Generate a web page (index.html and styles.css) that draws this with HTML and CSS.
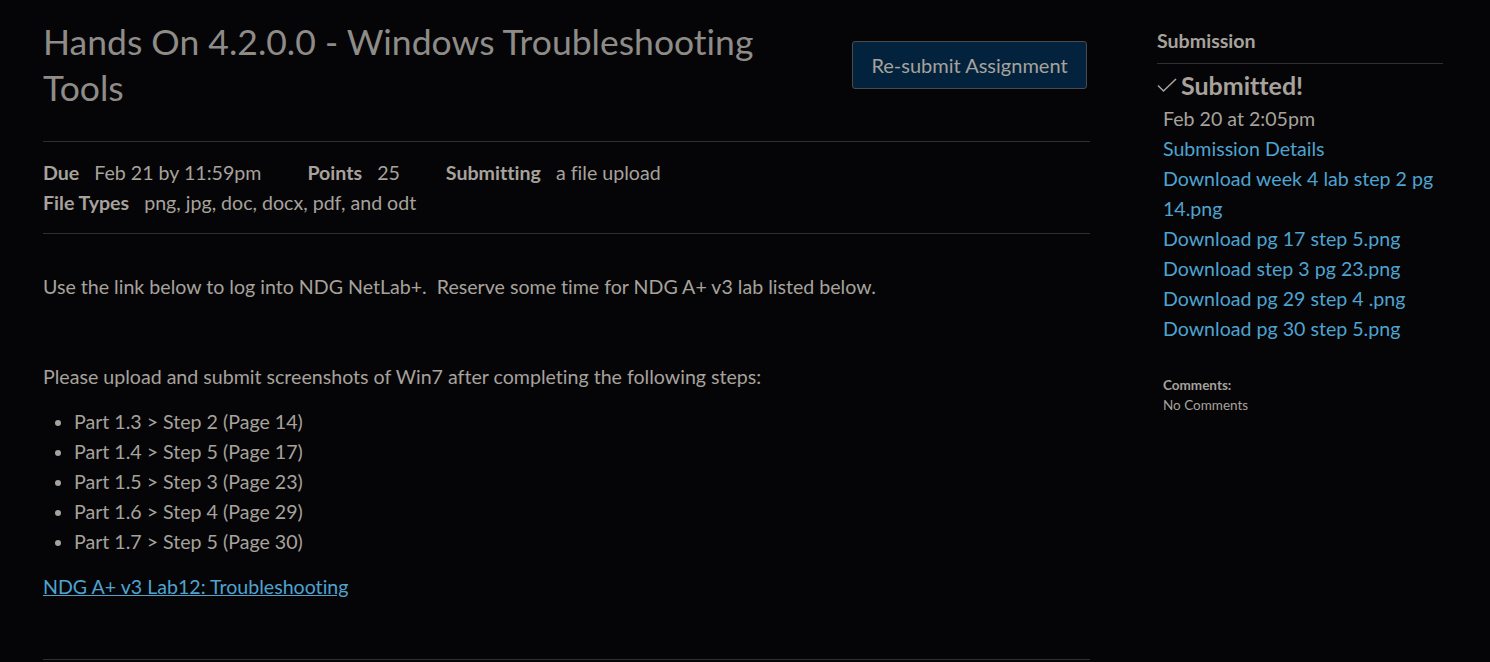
FILE: index.html
```html
<!DOCTYPE html>
<html lang="en">
<head>
<meta charset="utf-8">
<title>Hands On 4.2.0.0 - Windows Troubleshooting Tools</title>
<link rel="stylesheet" href="styles.css">
</head>
<body>
<div class="page">
  <main class="main">
    <div class="header">
      <h1 class="title">Hands On 4.2.0.0 - Windows Troubleshooting Tools</h1>
      <button class="btn">Re-submit Assignment</button>
    </div>
    <div class="details">
      <div class="detail-row">
        <span class="item"><b>Due</b><span>Feb 21 by 11:59pm</span></span>
        <span class="item"><b>Points</b><span>25</span></span>
        <span class="item"><b>Submitting</b><span>a file upload</span></span>
      </div>
      <div class="detail-row">
        <span class="item"><b>File Types</b><span>png, jpg, doc, docx, pdf, and odt</span></span>
      </div>
    </div>
    <div class="description">
      <p class="p1">Use the link below to log into NDG NetLab+.&nbsp; Reserve some time for NDG A+ v3 lab listed below.</p>
      <p class="p2">Please upload and submit screenshots of Win7 after completing the following steps:</p>
      <ul class="steps">
        <li>Part 1.3 &gt; Step 2 (Page 14)</li>
        <li>Part 1.4 &gt; Step 5 (Page 17)</li>
        <li>Part 1.5 &gt; Step 3 (Page 23)</li>
        <li>Part 1.6 &gt; Step 4 (Page 29)</li>
        <li>Part 1.7 &gt; Step 5 (Page 30)</li>
      </ul>
      <p class="p3"><a href="#" class="ext">NDG A+ v3 Lab12: Troubleshooting</a></p>
    </div>
  </main>
  <aside class="side">
    <h2 class="side-title">Submission</h2>
    <div class="submitted">
      <svg class="check" width="20" height="16" viewBox="0 0 20 16"><path d="M1 8.5 L6.5 14 L19 2" fill="none" stroke="#a7a29b" stroke-width="1.6"/></svg>
      <span>Submitted!</span>
    </div>
    <div class="sub-list">
      <div class="sub-date">Feb 20 at 2:05pm</div>
      <a href="#" class="link">Submission Details</a>
      <a href="#" class="link">Download week 4 lab step 2 pg 14.png</a>
      <a href="#" class="link">Download pg 17 step 5.png</a>
      <a href="#" class="link">Download step 3 pg 23.png</a>
      <a href="#" class="link">Download pg 29 step 4 .png</a>
      <a href="#" class="link">Download pg 30 step 5.png</a>
    </div>
    <div class="comments">
      <div class="comments-title">Comments:</div>
      <div class="comments-none">No Comments</div>
    </div>
  </aside>
</div>
</body>
</html>
```
FILE: styles.css
```css
html, body {
  margin: 0;
  padding: 0;
  background: #050508;
  color: #a7a29b;
  font-family: Lato, "Liberation Sans", sans-serif;
  font-size: 19.6px;
  font-variant-ligatures: none;
}
.page {
  display: flex;
  padding: 0 46px 0 43px;
  height: 662px;
  overflow: hidden;
}
.main {
  width: 1047px;
  flex: none;
}
.header {
  display: flex;
  justify-content: space-between;
  align-items: flex-start;
  padding-top: 19px;
  padding-bottom: 30px;
  border-bottom: 1px solid #2f2f31;
}
.title {
  margin: 0;
  font-size: 35.5px;
  font-weight: 400;
  line-height: 46px;
  color: #8f8c88;
  width: 740px;
}
.btn {
  margin: 22px 3px 0 0;
  background: #03223d;
  border: 1px solid #4a4a4a;
  border-radius: 3px;
  color: #a7a29b;
  font-family: inherit;
  font-size: 20px;
  font-variant-ligatures: none;
  height: 48px;
  width: 235px;
  padding: 0;
}
.details {
  padding: 16px 0 15px;
  border-bottom: 1px solid #2f2f31;
}
.detail-row {
  display: flex;
  line-height: 30px;
  gap: 46px;
}
.item b {
  font-weight: 700;
  margin-right: 15px;
  color: #a7a29b;
}
.description {
  padding-top: 38px;
  padding-bottom: 57px;
  border-bottom: 1px solid #2f2f31;
}
.description p {
  margin: 0;
  line-height: 30px;
}
.p1 { margin-bottom: 60px !important; }
.p2 { margin-bottom: 15px !important; }
.steps {
  margin: 0 0 15px;
  padding-left: 31px;
}
.steps li {
  line-height: 30px;
}
.steps li::marker {
  color: #a7a29b;
}
.ext {
  color: #4fa3cf;
  text-decoration: underline;
}
.side {
  margin-left: 67px;
  width: 286px;
  flex: none;
  padding-top: 28px;
}
.side-title {
  margin: 0;
  font-size: 19.6px;
  font-weight: 700;
  line-height: 26px;
  padding-bottom: 9px;
  border-bottom: 1px solid #2f2f31;
  color: #a7a29b;
}
.submitted {
  display: flex;
  align-items: center;
  gap: 4px;
  font-size: 25px;
  font-weight: 700;
  line-height: 30px;
  margin-top: 6px;
}
.sub-list {
  padding-left: 6px;
  display: flex;
  flex-direction: column;
  line-height: 30px;
  padding-top: 4px;
}
.link {
  color: #4fa3cf;
  text-decoration: none;
}
.comments {
  padding-left: 6px;
  margin-top: 31px;
  font-size: 13.5px;
  line-height: 20px;
}
.comments-title { font-weight: 700; }
```
